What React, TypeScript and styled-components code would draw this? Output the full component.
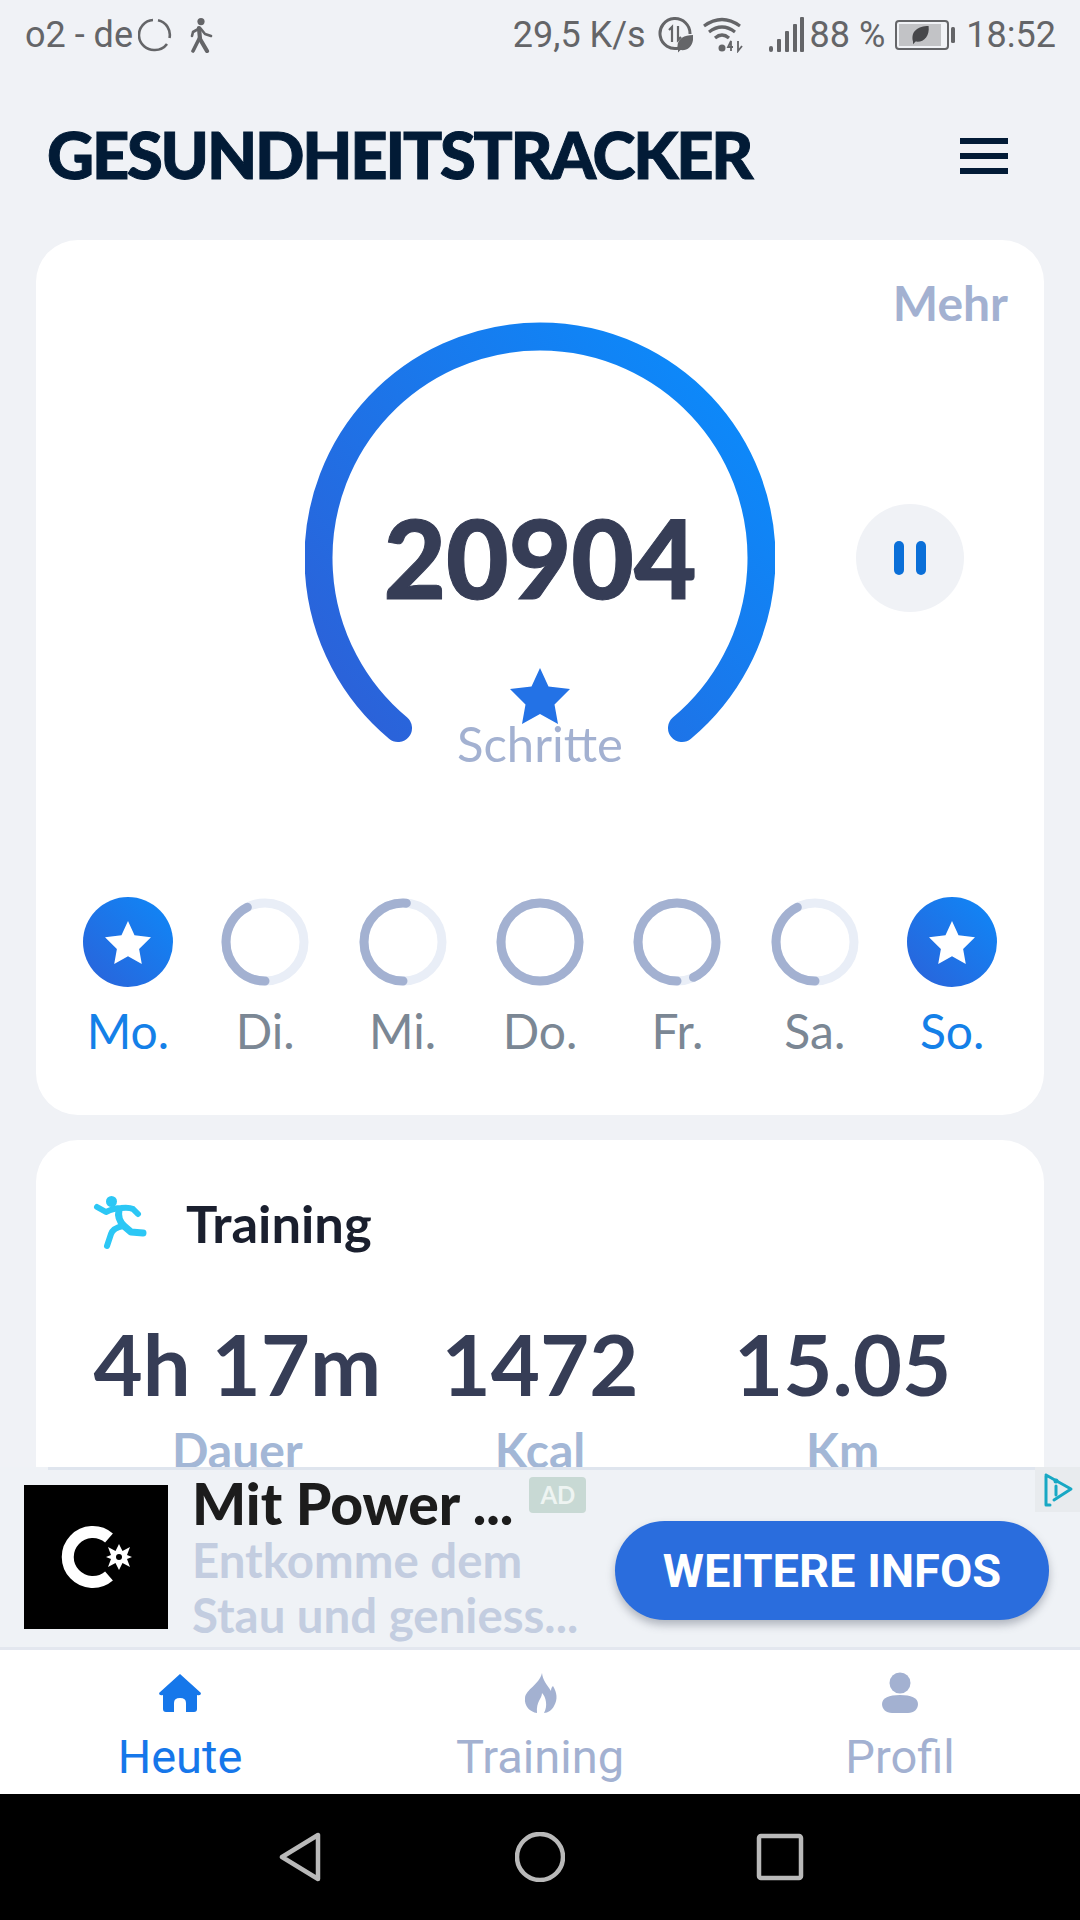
import * as React from 'react';
import styled, { createGlobalStyle } from 'styled-components';

const GlobalStyle = createGlobalStyle`
    html, body {
        margin: 0;
        padding: 0;
        background: #f0f2f6;
    }
    * {
        box-sizing: border-box;
    }
`;

const Screen = styled.div`
    width: 1080px;
    height: 1920px;
    display: flex;
    flex-direction: column;
    background: #f0f2f6;
    font-family: Lato, sans-serif;
    overflow: hidden;
`;

/* status bar */

const StatusBar = styled.div`
    height: 70px;
    flex: none;
    display: flex;
    align-items: center;
    justify-content: space-between;
    padding: 0 24px 0 25px;
    font-family: Roboto, sans-serif;
    font-size: 36px;
    color: #646568;
`;

const StatusGroup = styled.div<{ $gap: number }>`
    display: flex;
    align-items: center;
    gap: ${(p) => p.$gap}px;
`;

const StatusSpacer = styled.span<{ $width: number }>`
    width: ${(p) => p.$width}px;
`;

const StatusText = styled.span`
    line-height: 70px;
    white-space: nowrap;
`;

/* header */

const Header = styled.header`
    height: 170px;
    flex: none;
    display: flex;
    align-items: flex-start;
    justify-content: space-between;
    padding: 45px 72px 0 47px;
`;

const Title = styled.h1`
    margin: 0;
    font-size: 65px;
    line-height: 78px;
    font-weight: 900;
    letter-spacing: -2.2px;
    color: #021b36;
    -webkit-text-stroke: 1px #021b36;
`;

const MenuButton = styled.div`
    width: 48px;
    margin-top: 23px;
    display: flex;
    flex-direction: column;
    gap: 9px;
`;

const MenuBar = styled.span`
    height: 6px;
    background: #021b36;
`;

/* scrolling content */

const Content = styled.main`
    flex: 1;
    min-height: 0;
    overflow: hidden;
    padding: 0 36px;
    display: flex;
    flex-direction: column;
    gap: 25px;
`;

const Card = styled.section`
    flex: none;
    background: #ffffff;
    border-radius: 42px;
`;

const StepsCard = styled(Card)`
    height: 875px;
    padding: 0 24px;
`;

const MoreRow = styled.div`
    height: 82px;
    padding: 34px 12px 0 0;
    text-align: right;
    font-size: 48px;
    line-height: 58px;
    font-weight: 700;
    color: #a3b1d1;
`;

const GaugeRow = styled.div`
    display: grid;
    grid-template-columns: 1fr 470px 1fr;
    height: 448px;
`;

const Gauge = styled.div`
    grid-column: 2;
    position: relative;
    width: 470px;
    height: 448px;
`;

const GaugeNumber = styled.div`
    position: absolute;
    left: 0;
    right: 0;
    top: 175px;
    text-align: center;
    font-size: 108px;
    line-height: 120px;
    font-weight: 900;
    color: #363d56;
    -webkit-text-stroke: 1px #363d56;
`;

const GaugeStar = styled.svg`
    position: absolute;
    left: 205px;
    top: 346px;
`;

const GaugeLabel = styled.div`
    position: absolute;
    left: 0;
    right: 0;
    top: 394px;
    text-align: center;
    font-size: 49px;
    line-height: 54px;
    color: #a3b1d1;
`;

const PauseCell = styled.div`
    display: flex;
    align-items: flex-start;
    padding: 182px 0 0 81px;
`;

const PauseButton = styled.div`
    width: 108px;
    height: 108px;
    border-radius: 50%;
    background: #f0f2f6;
    display: flex;
    align-items: center;
    justify-content: center;
    gap: 12px;
`;

const PauseBar = styled.span`
    width: 10px;
    height: 34px;
    border-radius: 5px;
    background: #0a6fd8;
`;

const Week = styled.div`
    display: grid;
    grid-template-columns: repeat(7, 137.4px);
    justify-content: center;
    margin-top: 127px;
`;

const Day = styled.div`
    display: flex;
    flex-direction: column;
    align-items: center;
`;

const DayBadge = styled.div`
    width: 90px;
    height: 90px;
    display: flex;
    align-items: center;
    justify-content: center;
    border-radius: 50%;
    background: linear-gradient(45deg, #2b62d9, #0e88f8);
`;

const DayRing = styled.svg`
    width: 90px;
    height: 90px;
    display: block;
`;

const DayLabel = styled.div<{ $active: boolean }>`
    margin-top: 16px;
    font-size: 48px;
    line-height: 56px;
    color: ${(p) => (p.$active ? '#1480e8' : '#7b8794')};
`;

const TrainingCard = styled(Card)`
    height: 420px;
    padding: 53px 50px 0;
`;

const TrainingHeading = styled.div`
    display: flex;
    align-items: center;
    gap: 37px;
    padding-left: 7px;
    height: 60px;
`;

const TrainingTitle = styled.h2`
    margin: 0;
    font-size: 52.5px;
    line-height: 60px;
    font-weight: 700;
    color: #1a1f2e;
`;

const Stats = styled.div`
    display: grid;
    grid-template-columns: repeat(3, 1fr);
    margin-top: 60px;
`;

const Stat = styled.div`
    text-align: center;
`;

const StatValue = styled.div`
    font-size: 85px;
    line-height: 100px;
    font-weight: 700;
    color: #363d56;
    white-space: nowrap;
`;

const StatLabel = styled.div`
    margin-top: 10px;
    font-size: 48px;
    line-height: 54px;
    font-weight: 700;
    color: #a3b7d6;
`;

/* ad banner */

const AdBanner = styled.aside`
    position: relative;
    flex: none;
    height: 183px;
    display: flex;
    padding: 18px 31px 0 24px;
    background: #eff2f6;
    border-bottom: 3px solid #e3e7ef;

    &::before {
        content: '';
        position: absolute;
        left: 48px;
        right: 45px;
        top: 0;
        height: 3px;
        background: #dfe5ee;
    }
`;

const AdLogo = styled.svg`
    width: 144px;
    height: 144px;
    flex: none;
    background: #000000;
`;

const AdCopy = styled.div`
    flex: 1;
    margin-left: 24px;
    margin-top: -11px;
`;

const AdTitleRow = styled.div`
    display: flex;
    align-items: flex-start;
    gap: 16px;
    height: 58px;
`;

const AdTitle = styled.div`
    font-size: 57px;
    line-height: 58px;
    font-weight: 900;
    color: #1c1c1c;
`;

const AdTag = styled.span`
    margin-top: 3px;
    width: 57px;
    height: 36px;
    border-radius: 4px;
    background: #c8d9d4;
    color: #eef4f2;
    font-size: 24px;
    line-height: 36px;
    font-weight: 700;
    text-align: center;
`;

const AdText = styled.div`
    font-size: 47.4px;
    line-height: 55px;
    font-weight: 700;
    color: #c3cde0;
    white-space: nowrap;
`;

const AdAction = styled.div`
    flex: none;
    width: 434px;
    height: 99px;
    margin-top: 36px;
    border-radius: 50px;
    background: #2a6ddd;
    box-shadow: 0 5px 8px rgba(60, 70, 90, 0.35);
    color: #ffffff;
    font-family: Roboto, sans-serif;
    font-size: 47px;
    line-height: 99px;
    font-weight: 700;
    text-align: center;
`;

const AdChoices = styled.div`
    position: absolute;
    right: 0;
    top: 0;
    width: 45px;
    height: 45px;
    background: #e8ebee;
    display: flex;
    align-items: center;
    justify-content: center;
`;

/* bottom tabs */

const TabBar = styled.nav`
    flex: none;
    height: 144px;
    background: #ffffff;
    display: grid;
    grid-template-columns: repeat(3, 1fr);
`;

const Tab = styled.div<{ $active?: boolean }>`
    display: flex;
    flex-direction: column;
    align-items: center;
    padding-top: 21px;
    color: ${(p) => (p.$active ? '#1677ea' : '#a3b1d1')};
`;

const TabIcon = styled.svg`
    width: 44px;
    height: 44px;
    display: block;
    fill: currentColor;
`;

const TabLabel = styled.div`
    margin-top: 15px;
    font-family: Roboto, sans-serif;
    font-size: 47px;
    line-height: 54px;
`;

/* android navigation */

const SystemNav = styled.div`
    flex: none;
    height: 126px;
    background: #000000;
    display: flex;
    align-items: center;
    justify-content: center;
    gap: 190px;
`;

const SystemIcon = styled.svg`
    width: 50px;
    height: 50px;
    fill: none;
    stroke: #b9b9b9;
    stroke-width: 4.5;
    stroke-linejoin: round;
`;

const days = [
    { label: 'Mo.', done: true, sweep: 360 },
    { label: 'Di.', done: false, sweep: 153 },
    { label: 'Mi.', done: false, sweep: 185 },
    { label: 'Do.', done: false, sweep: 360 },
    { label: 'Fr.', done: false, sweep: 335 },
    { label: 'Sa.', done: false, sweep: 153 },
    { label: 'So.', done: true, sweep: 360 },
];

const stats = [
    { value: '4h 17m', label: 'Dauer' },
    { value: '1472', label: 'Kcal' },
    { value: '15.05', label: 'Km' },
];

const STAR_POINTS = '30,0 38.5,18.5 60,21 44.5,36.5 48,56 30,46 12,56 15.5,36.5 0,21 21.5,18.5';

const GaugeArc = () => (
    <svg width="470" height="448" viewBox="0 0 470 448">
        <defs>
            <linearGradient id="gaugeFill" gradientUnits="userSpaceOnUse" x1="60" y1="400" x2="420" y2="90">
                <stop offset="0" stopColor="#2b62d9" />
                <stop offset="1" stopColor="#0d88f9" />
            </linearGradient>
        </defs>
        <path
            d="M 93 406 A 221.5 221.5 0 1 1 377 406"
            fill="none"
            stroke="url(#gaugeFill)"
            strokeWidth="28"
            strokeLinecap="round"
        />
    </svg>
);

const ProgressRing = ({ sweep }: { sweep: number }) => (
    <DayRing viewBox="0 0 90 90">
        <circle cx="45" cy="45" r="39" fill="none" stroke="#e9eef7" strokeWidth="9" />
        <circle
            cx="45"
            cy="45"
            r="39"
            fill="none"
            stroke="#a3b1d1"
            strokeWidth="9"
            strokeLinecap="round"
            pathLength={360}
            strokeDasharray={`${sweep} 360`}
            transform="rotate(90 45 45)"
        />
    </DayRing>
);

const RunnerIcon = () => (
    <svg width="56" height="60" viewBox="12 8 56 58" fill="none" stroke="#2cc7f5" strokeWidth="7" strokeLinecap="round" strokeLinejoin="round">
        <circle cx="30.5" cy="15.5" r="5.5" fill="#2cc7f5" stroke="none" />
        <path d="M16 21 L25 26 Q33 22 40 22 Q48 21 52 23 L57 28" strokeWidth="6" />
        <path d="M38 24 Q36 33 43 40 L50 46 L62 47" />
        <path d="M42 40 Q32 42 30 48 L26 60" strokeWidth="6" />
    </svg>
);

const SpinnerIcon = () => (
    <svg width="34" height="34" viewBox="0 0 34 34" fill="none" stroke="#646568" strokeWidth="2.6">
        <path d="M15 2 A15 15 0 0 0 17 32 A15 15 0 0 0 29 26" />
        <path d="M20 2.2 A15 15 0 0 1 31.5 20" />
    </svg>
);

const WalkIcon = () => (
    <svg width="23" height="35" viewBox="0 0 23 35" fill="none" stroke="#646568" strokeWidth="3.6" strokeLinecap="round" strokeLinejoin="round">
        <circle cx="11" cy="3.6" r="3.6" fill="#646568" stroke="none" />
        <path d="M9 10 L10 21 L17 33" strokeWidth="4.2" />
        <path d="M9.5 20 L3 33" />
        <path d="M10 10 L3 14 L2 18" strokeWidth="2.6" />
        <path d="M11 11 L15 16 L21 18" strokeWidth="2.6" />
    </svg>
);

const LeafShape = ({ transform, fill }: { transform: string; fill: string }) => (
    <path d="M0 12 C-2 4 4 0 12 0 C13 8 8 13 2 12 L0 14 Z" transform={transform} fill={fill} stroke="none" />
);

const DataSaverIcon = () => (
    <svg width="37" height="36" viewBox="-3 0 37 36" fill="none" stroke="#646568" strokeWidth="3">
        <path d="M20 31 A15 15 0 1 1 31 17" />
        <path d="M13 25 V10 L10 13 M19 9 V23 L22 20" strokeWidth="2.2" />
        <LeafShape transform="translate(19 18) scale(1.25)" fill="#646568" />
    </svg>
);

const WifiIcon = () => (
    <svg width="40" height="36" viewBox="0 0 40 36" fill="none" stroke="#646568" strokeWidth="3.2">
        <path d="M1 9 Q19 -4 37 9" />
        <path d="M6 15 Q19 5 32 15" />
        <path d="M12 21 Q19 15 26 21" />
        <circle cx="19" cy="31" r="3.5" fill="#646568" stroke="none" />
        <path d="M28 34 V24 L25 30 H30 M35 24 V34 L39 29" strokeWidth="1.8" />
    </svg>
);

const SignalIcon = () => (
    <svg width="36" height="36" viewBox="0 0 36 36" fill="#646568">
        <rect x="0" y="29" width="4" height="6" rx="2" />
        <rect x="8" y="22" width="4" height="13" rx="1" />
        <rect x="16" y="14" width="4" height="21" rx="1" />
        <rect x="24" y="7" width="4" height="28" rx="1" />
        <rect x="31" y="0" width="4" height="35" rx="1" />
    </svg>
);

const BatteryIcon = () => (
    <svg width="61" height="30" viewBox="0 0 61 30">
        <rect x="1" y="1" width="52" height="28" rx="3" fill="none" stroke="#646568" strokeWidth="2" />
        <rect x="4" y="4" width="42" height="22" fill="#c2c3c6" />
        <rect x="56" y="7" width="4" height="16" rx="1.5" fill="#646568" />
        <LeafShape transform="translate(18 6) scale(1.3)" fill="#46474a" />
    </svg>
);

const App: React.FC = () => (
    <Screen>
        <GlobalStyle />
        <StatusBar>
            <StatusGroup $gap={5}>
                <StatusText>o2 - de</StatusText>
                <SpinnerIcon />
                <StatusSpacer $width={8} />
                <WalkIcon />
            </StatusGroup>
            <StatusGroup $gap={10}>
                <StatusText>29,5 K/s</StatusText>
                <DataSaverIcon />
                <WifiIcon />
                <StatusSpacer $width={6} />
                <StatusGroup $gap={5}>
                    <SignalIcon />
                    <StatusText>88 %</StatusText>
                </StatusGroup>
                <BatteryIcon />
                <StatusText>18:52</StatusText>
            </StatusGroup>
        </StatusBar>

        <Header>
            <Title>GESUNDHEITSTRACKER</Title>
            <MenuButton>
                <MenuBar />
                <MenuBar />
                <MenuBar />
            </MenuButton>
        </Header>

        <Content>
            <StepsCard>
                <MoreRow>Mehr</MoreRow>
                <GaugeRow>
                    <Gauge>
                        <GaugeArc />
                        <GaugeNumber>20904</GaugeNumber>
                        <GaugeStar width="60" height="56" viewBox="0 0 60 56">
                            <polygon points={STAR_POINTS} fill="#2372e6" />
                        </GaugeStar>
                        <GaugeLabel>Schritte</GaugeLabel>
                    </Gauge>
                    <PauseCell>
                        <PauseButton>
                            <PauseBar />
                            <PauseBar />
                        </PauseButton>
                    </PauseCell>
                </GaugeRow>
                <Week>
                    {days.map((day) => (
                        <Day key={day.label}>
                            {day.done ? (
                                <DayBadge>
                                    <svg width="46" height="43" viewBox="0 0 60 56">
                                        <polygon points={STAR_POINTS} fill="#ffffff" />
                                    </svg>
                                </DayBadge>
                            ) : (
                                <ProgressRing sweep={day.sweep} />
                            )}
                            <DayLabel $active={day.done}>{day.label}</DayLabel>
                        </Day>
                    ))}
                </Week>
            </StepsCard>

            <TrainingCard>
                <TrainingHeading>
                    <RunnerIcon />
                    <TrainingTitle>Training</TrainingTitle>
                </TrainingHeading>
                <Stats>
                    {stats.map((stat) => (
                        <Stat key={stat.label}>
                            <StatValue>{stat.value}</StatValue>
                            <StatLabel>{stat.label}</StatLabel>
                        </Stat>
                    ))}
                </Stats>
            </TrainingCard>
        </Content>

        <AdBanner>
            <AdLogo viewBox="0 0 144 144">
                <path d="M85 53 A25 25 0 1 0 85 91" fill="none" stroke="#ffffff" strokeWidth="12" />
                <polygon
                    points="95,59 98.5,66 106,62 103,70 108,72 103,74 106,82 98.5,78 95,85 91.5,78 84,82 87,74 82,72 87,70 84,62 91.5,66"
                    fill="#ffffff"
                />
                <circle cx="95" cy="72" r="3" fill="#000000" />
            </AdLogo>
            <AdCopy>
                <AdTitleRow>
                    <AdTitle>Mit Power ...</AdTitle>
                    <AdTag>AD</AdTag>
                </AdTitleRow>
                <AdText>Entkomme dem</AdText>
                <AdText>Stau und geniess...</AdText>
            </AdCopy>
            <AdAction>WEITERE INFOS</AdAction>
            <AdChoices>
                <svg width="32" height="38" viewBox="0 0 32 36" fill="none" stroke="#18a8c4" strokeWidth="3" strokeLinejoin="round" strokeLinecap="round">
                    <path d="M4 3 L29 17 L12 28 M4 3 V33 H8" />
                    <path d="M14 14 V23" />
                    <circle cx="14" cy="9" r="1" />
                </svg>
            </AdChoices>
        </AdBanner>

        <TabBar>
            <Tab $active>
                <TabIcon viewBox="0 0 44 44">
                    <path d="M22 3 L43 22 Q43 25 39 24 V38 Q39 41 36 41 H28 V32 Q28 27 22 27 Q16 27 16 32 V41 H8 Q5 41 5 38 V24 Q1 25 1 22 Z" />
                </TabIcon>
                <TabLabel>Heute</TabLabel>
            </Tab>
            <Tab>
                <TabIcon viewBox="0 0 44 44">
                    <path d="M24 2 C25 10 28 12 33 20 C33 17 34 16 35 15 C39 22 40 28 36 35 C34 39 30 42 26 42 C30 35 28 26 24 22 C24 28 18 30 19 42 C12 41 6 35 7 27 C8 18 21 14 24 2 Z" />
                </TabIcon>
                <TabLabel>Training</TabLabel>
            </Tab>
            <Tab>
                <TabIcon viewBox="0 0 44 44">
                    <circle cx="22" cy="12" r="10.5" />
                    <path d="M4 33 C4 27 11 24 22 24 C33 24 40 27 40 33 C40 38 36 42 30 42 H14 C8 42 4 38 4 33 Z" />
                </TabIcon>
                <TabLabel>Profil</TabLabel>
            </Tab>
        </TabBar>

        <SystemNav>
            <SystemIcon viewBox="0 0 50 50">
                <path d="M43 3 V47 L7 25 Z" />
            </SystemIcon>
            <SystemIcon viewBox="0 0 50 50">
                <circle cx="25" cy="25" r="23" />
            </SystemIcon>
            <SystemIcon viewBox="0 0 50 50">
                <rect x="4" y="4" width="42" height="42" rx="2" />
            </SystemIcon>
        </SystemNav>
    </Screen>
);

export default App;
